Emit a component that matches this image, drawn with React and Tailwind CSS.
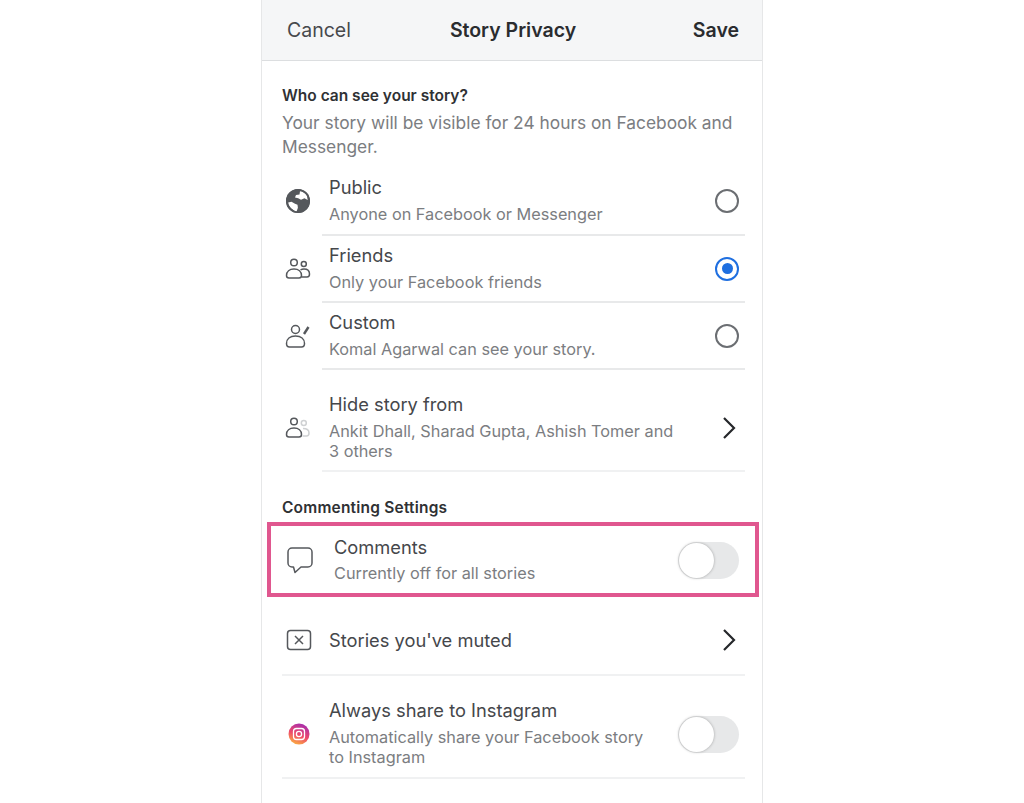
const BODY = 'text-[18.300px] leading-[26px] text-[#45474b]';
const SUB = 'text-[16.300px] leading-[20px] text-[#7b7d81]';
const HEADING = 'text-[15.500px] leading-[20px] font-semibold text-[#2f3134]';

function GlobeIcon() {
  return (
    <svg width="26" height="26" viewBox="0 0 26 26">
      <circle cx="13" cy="13" r="12" fill="#55585c" />
      <path d="M15 3.200c3 .5 5.500 2 7 4.300l.7 4.500-3.200-1.700-3.500 1.500-2.800-1.600L10 9.500l1-2.500 3.500-.6z" fill="#fff" />
      <path d="M3.200 14.500l3.300-.8 3.500 2 2.500 1 .4 3-1.300 3.700C7.500 22.500 4 19 3.200 14.500z" fill="#fff" />
      <circle cx="13" cy="13" r="11.200" fill="none" stroke="#55585c" strokeWidth="1.600" />
    </svg>
  );
}

function FriendsIcon() {
  return (
    <svg width="26" height="22" viewBox="0 0 26 22" fill="none" stroke="#55585c" strokeWidth="1.500">
      <circle cx="9" cy="4.500" r="3.300" />
      <circle cx="18.800" cy="6" r="2.500" />
      <path d="M1.500 17.500c0-4 3-6.500 7.500-6.500s7.500 2.500 7.500 6.500c0 1.500-1 2.500-2.500 2.500H4c-1.500 0-2.500-1-2.500-2.500z" />
      <path d="M15.500 12c1-.7 2.200-1 3.500-1 3.500 0 5.500 2 5.500 5 0 2-1 3-2.500 3h-5.200" />
    </svg>
  );
}

function CustomIcon() {
  return (
    <svg width="26" height="26" viewBox="0 0 26 26" fill="none" stroke="#55585c" strokeWidth="1.500">
      <circle cx="10.500" cy="6.500" r="4" />
      <path d="M1.500 20.500c0-4.500 3.500-7.500 9-7.500s9 3 9 7.500c0 2-1 3.500-3 3.500h-12c-2 0-3-1.500-3-3.500z" />
      <path d="M19 11l4.500-7" strokeWidth="2.400" />
    </svg>
  );
}

function HideIcon() {
  return (
    <svg width="26" height="22" viewBox="0 0 26 22" fill="none" stroke="#55585c" strokeWidth="1.500">
      <circle cx="9" cy="4.500" r="3.300" />
      <path d="M1.500 17.500c0-4 3-6.500 7.500-6.500s7.500 2.500 7.500 6.500c0 1.500-1 2.500-2.500 2.500H4c-1.500 0-2.500-1-2.500-2.500z" />
      <g stroke="#cfd1d3">
        <circle cx="18.800" cy="6" r="2.500" />
        <path d="M18 11.500c3.500 0 6 1.500 6 4.500 0 2-1 3-2.500 3h-4" />
      </g>
    </svg>
  );
}

function CommentIcon() {
  return (
    <svg width="28" height="28" viewBox="0 0 28 28" fill="none" stroke="#55585c" strokeWidth="1.500">
      <path d="M6 2h16a4 4 0 0 1 4 4v11a4 4 0 0 1-4 4h-7l-6 5.500-1.500-5.500H6a4 4 0 0 1-4-4V6a4 4 0 0 1 4-4z" strokeLinejoin="round" />
    </svg>
  );
}

function MutedIcon() {
  return (
    <svg width="26" height="22" viewBox="0 0 26 22" fill="none" stroke="#55585c" strokeWidth="1.500">
      <rect x="1.500" y="1.500" width="23" height="19" rx="3" />
      <path d="M9 7l8 8M17 7l-8 8" />
    </svg>
  );
}

function InstagramIcon() {
  return (
    <svg width="22" height="22" viewBox="0 0 22 22">
      <defs>
        <linearGradient id="ig" x1="0.300" y1="1" x2="0.700" y2="0">
          <stop offset="0" stopColor="#fbb040" />
          <stop offset="0.450" stopColor="#ee4a6a" />
          <stop offset="1" stopColor="#a42cb0" />
        </linearGradient>
      </defs>
      <circle cx="11" cy="11" r="10.500" fill="url(#ig)" />
      <rect x="5.500" y="5.500" width="11" height="11" rx="3" fill="none" stroke="#fff" strokeWidth="1.300" />
      <circle cx="11" cy="11" r="2.600" fill="none" stroke="#fff" strokeWidth="1.300" />
    </svg>
  );
}

function Chevron() {
  return (
    <svg width="14" height="24" viewBox="0 0 14 24" fill="none" stroke="#26282b" strokeWidth="2.200" className="mr-[9px]">
      <path d="M2 2l10 10L2 22" />
    </svg>
  );
}

function Radio({ checked }) {
  if (checked) {
    return (
      <div className="w-6 h-6 mr-[6px] rounded-full border-[2.5px] border-[#1f6fe0] flex items-center justify-center">
        <div className="w-[11px] h-[11px] rounded-full bg-[#1f6fe0]" />
      </div>
    );
  }
  return <div className="w-6 h-6 mr-[6px] rounded-full border-2 border-[#6b6e72]" />;
}

function Toggle() {
  return (
    <div className="w-[61px] h-[37px] rounded-full bg-[#e7e8e9] p-[1px]">
      <div className="w-[35px] h-[35px] rounded-full bg-white shadow-[0_0_3px_rgba(0,0,0,0.3)]" />
    </div>
  );
}

function Row({ icon, title, sub, right, className }) {
  return (
    <div className={`flex items-center -ml-[40px] ${className}`}>
      <div className="w-[32px] mr-[15px] flex justify-center shrink-0">{icon}</div>
      <div className="flex-1 pb-[4px]">
        <div className={BODY}>{title}</div>
        <div className={`${SUB} mt-[4px]`}>{sub}</div>
      </div>
      {right}
    </div>
  );
}

export default function App() {
  return (
    <div className="min-h-[803px] bg-white flex justify-center overflow-hidden" style={{ fontFamily: 'Inter, "Liberation Sans", sans-serif' }}>
      <div className="w-[502px] h-[803px] border-x border-[#e6e7e8]">
        <div className="h-[61px] bg-[#f5f6f7] border-b border-[#dcdee0] grid grid-cols-[1fr_auto_1fr] items-center pl-[25px] pr-[23px] pt-[2px] text-[19.500px]">
          <span className="text-[#47494c]">Cancel</span>
          <span className="font-semibold text-[#2a2c2f]">Story Privacy</span>
          <span className="font-semibold text-[#2a2c2f] text-right">Save</span>
        </div>

        <div className="pl-[20px] pr-[17px]">
          <div className={`pt-[25px] ${HEADING}`}>Who can see your story?</div>
          <div className="mt-[5px] text-[17.350px] leading-[24px] text-[#7b7d81]">
            Your story will be visible for 24 hours on Facebook and
            <br />
            Messenger.
          </div>

          <div className="ml-[40px] mt-[7px]">
            <div className="border-b-2 border-[#e8e9ea]">
              <Row className="h-[68px] pt-[2px]" icon={<GlobeIcon />} title="Public" sub="Anyone on Facebook or Messenger" right={<Radio />} />
            </div>
            <div className="border-b-2 border-[#e8e9ea]">
              <Row className="h-[65px]" icon={<FriendsIcon />} title="Friends" sub="Only your Facebook friends" right={<Radio checked />} />
            </div>
            <div className="border-b-2 border-[#e8e9ea]">
              <Row className="h-[65px]" icon={<CustomIcon />} title="Custom" sub="Komal Agarwal can see your story." right={<Radio />} />
            </div>
            <div className="border-b-2 border-[#f0f1f2]">
              <Row
                className="h-[100px] pt-[16px]"
                icon={<HideIcon />}
                title="Hide story from"
                sub={<>Ankit Dhall, Sharad Gupta, Ashish Tomer and<br />3 others</>}
                right={<Chevron />}
              />
            </div>
          </div>

          <div className={`mt-[26px] ${HEADING} tracking-[0.2px]`}>Commenting Settings</div>

          <div className="mt-[4px] -ml-[15px] -mr-[14px] h-[75px] border-[4px] border-[#e0578f] flex items-center pl-[15px] pr-[16px]">
            <div className="w-[37px] shrink-0"><CommentIcon /></div>
            <div className="flex-1 ml-[11px] pb-[2px]">
              <div className={BODY}>Comments</div>
              <div className={`${SUB} mt-[3px]`}>Currently off for all stories</div>
            </div>
            <div className="mt-[2px]"><Toggle /></div>
          </div>

          <div className="h-[79px] border-b-2 border-[#f0f1f2] flex items-center pt-[8px]">
            <div className="w-[47px] shrink-0 pl-[4px]"><MutedIcon /></div>
            <div className={`flex-1 ${BODY}`}>Stories you've muted</div>
            <Chevron />
          </div>
          <div className="h-[103px] border-b-2 border-[#f0f1f2] flex items-center pt-[14px]">
            <div className="w-[47px] shrink-0 pl-[6px]"><InstagramIcon /></div>
            <div className="flex-1 pb-[3px]">
              <div className={BODY}>Always share to Instagram</div>
              <div className={`${SUB} mt-[4px]`}>Automatically share your Facebook story<br />to Instagram</div>
            </div>
            <div className="mr-[6px] mt-[2px]"><Toggle /></div>
          </div>
        </div>
      </div>
    </div>
  );
}
